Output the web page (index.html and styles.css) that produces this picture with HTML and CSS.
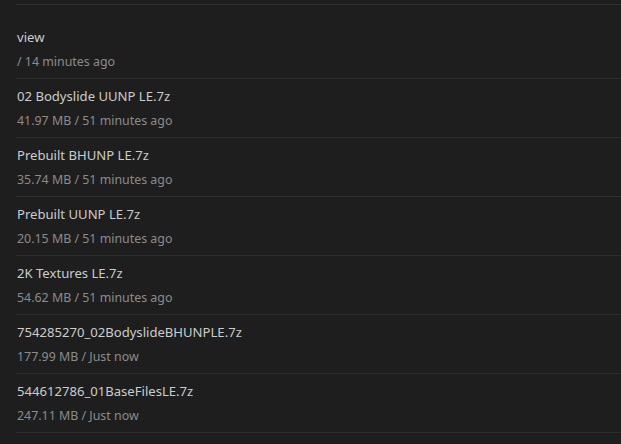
FILE: index.html
```html
<!DOCTYPE html>
<html lang="en">
<head>
    <meta charset="UTF-8">
    <title>Downloads</title>
    <link rel="stylesheet" href="styles.css">
</head>
<body>
    <div class="divider"></div>
    <ul class="file-list">
        <li class="file-item">
            <div class="file-name">view</div>
            <div class="file-meta">/ 14 minutes ago</div>
        </li>
        <li class="file-item">
            <div class="file-name">02 Bodyslide UUNP LE.7z</div>
            <div class="file-meta">41.97 MB / 51 minutes ago</div>
        </li>
        <li class="file-item">
            <div class="file-name">Prebuilt BHUNP LE.7z</div>
            <div class="file-meta">35.74 MB / 51 minutes ago</div>
        </li>
        <li class="file-item">
            <div class="file-name">Prebuilt UUNP LE.7z</div>
            <div class="file-meta">20.15 MB / 51 minutes ago</div>
        </li>
        <li class="file-item">
            <div class="file-name">2K Textures LE.7z</div>
            <div class="file-meta">54.62 MB / 51 minutes ago</div>
        </li>
        <li class="file-item">
            <div class="file-name">754285270_02BodyslideBHUNPLE.7z</div>
            <div class="file-meta">177.99 MB / Just now</div>
        </li>
        <li class="file-item">
            <div class="file-name">544612786_01BaseFilesLE.7z</div>
            <div class="file-meta">247.11 MB / Just now</div>
        </li>
    </ul>
</body>
</html>
```

FILE: styles.css
```css
body {
    font-family: "Noto Sans", "Open Sans", sans-serif;
    margin: 0;
    padding: 4px 0 0 16px;
    background-color: #1e1e1e;
    overflow: hidden;
}
.divider {
    height: 1px;
    background-color: #2c2c2c;
}
.file-list {
    list-style: none;
    margin: 0;
    padding: 15px 0 0 0;
}
.file-item {
    display: flex;
    flex-direction: column;
    gap: 5px;
    padding: 7px 0 6px 1px;
    border-bottom: 1px solid #2c2c2c;
}
.file-name {
    font-size: 13.1px;
    line-height: 20px;
    color: #cccccc;
}
.file-meta {
    font-size: 12.4px;
    line-height: 20px;
    color: #8b8b8b;
}
```
